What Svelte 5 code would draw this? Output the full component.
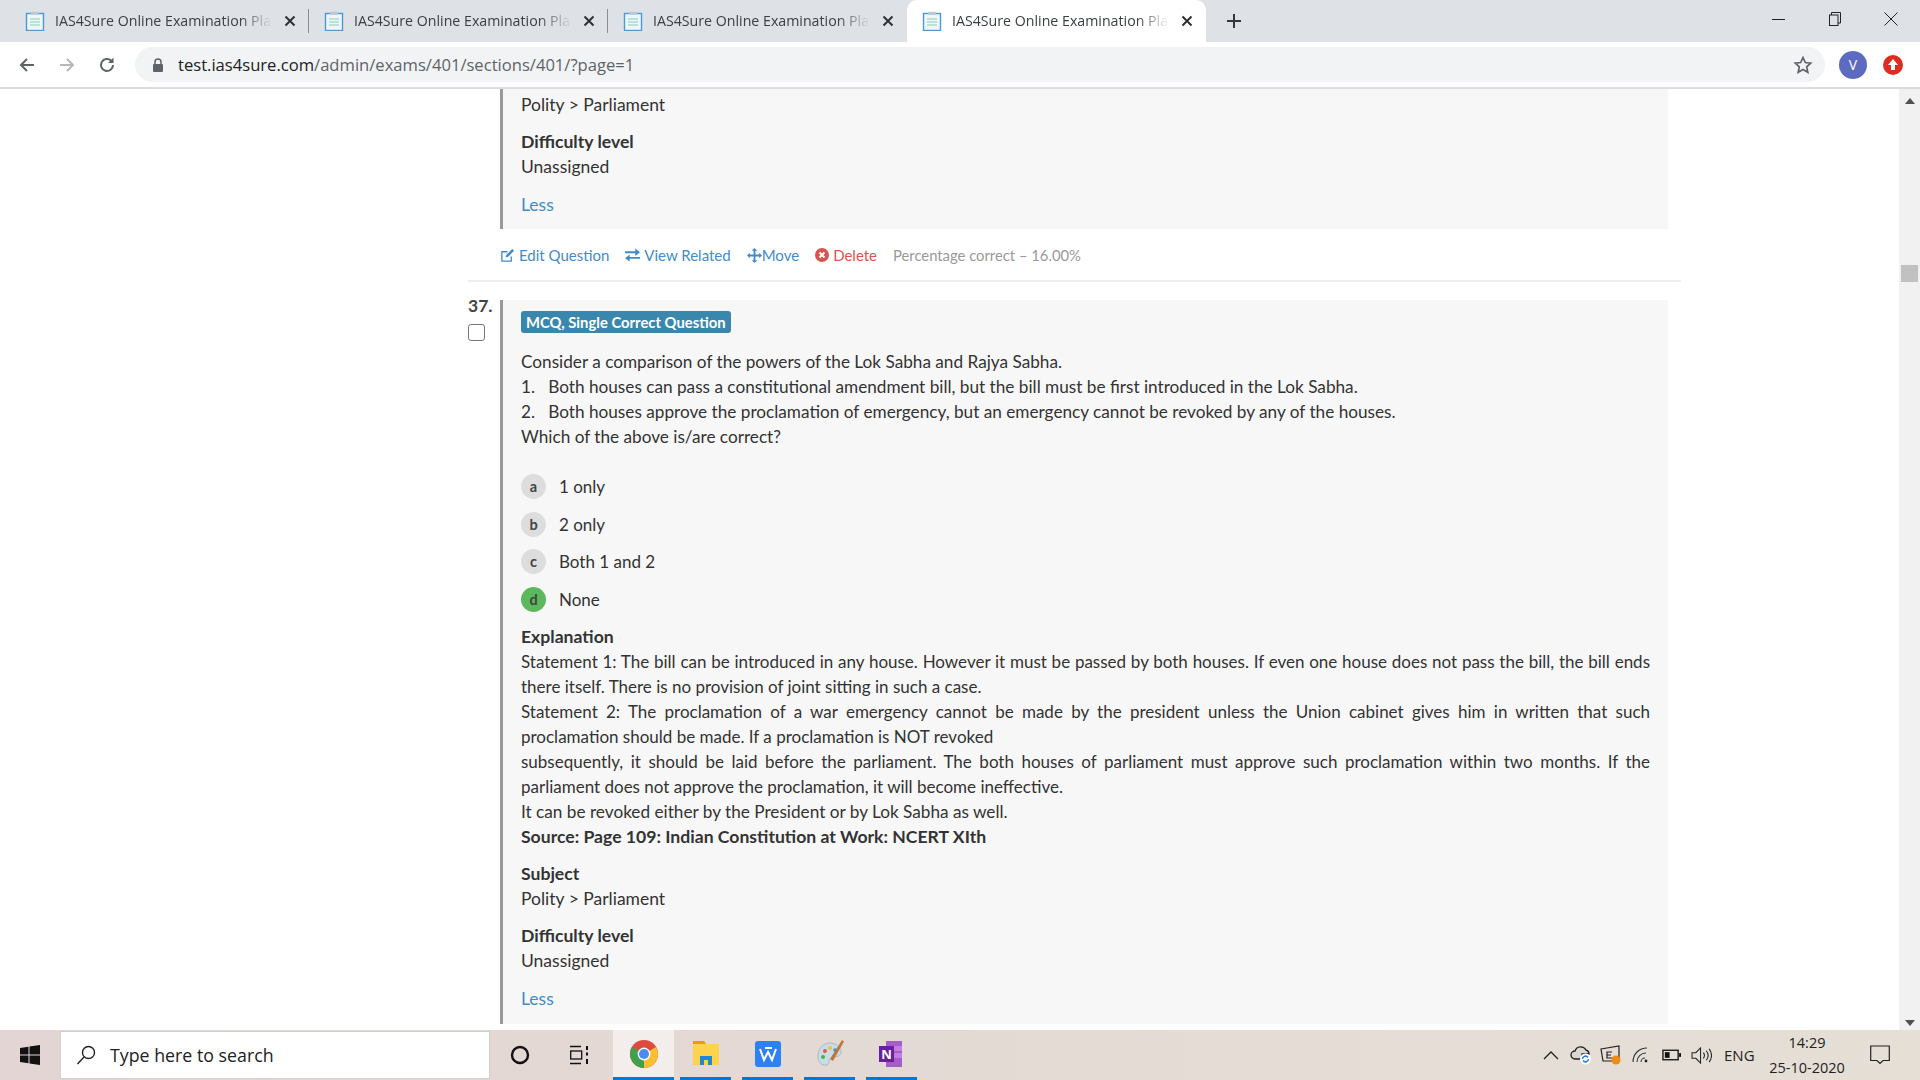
<script>
  const tabs = [{ active: false }, { active: false }, { active: false }, { active: true }];
  const options = [
    { key: 'a', text: '1 only' },
    { key: 'b', text: '2 only' },
    { key: 'c', text: 'Both 1 and 2' },
    { key: 'd', text: 'None', correct: true }
  ];
</script>

{#snippet tabIcon()}
  <svg class="tab-icon" viewBox="0 0 20 20" width="20" height="20">
    <rect x="1.5" y="2.5" width="17" height="17" fill="#eef6fb" stroke="#4a9bd6" stroke-width="1.4" />
    <rect x="6" y="0.8" width="8" height="3" fill="#b9c8d2" />
    <path d="M5 8h10M5 11h10M5 14h10" stroke="#a9dcc9" stroke-width="1.6" />
  </svg>
{/snippet}

<div class="window">
  <div class="tabbar">
    <div class="tabs">
      {#each tabs as tab, i}
        <div class="tab" class:active={tab.active} class:sep={i < 2}>
          {@render tabIcon()}
          <span class="tab-title">IAS4Sure Online Examination Plat</span>
          <svg class="tab-close" viewBox="0 0 12 12" width="12" height="12">
            <path d="M1.5 1.5l9 9M10.5 1.5l-9 9" stroke="#2f3134" stroke-width="2" />
          </svg>
        </div>
      {/each}
      <svg class="new-tab" viewBox="0 0 16 16" width="16" height="16">
        <path d="M8 1v14M1 8h14" stroke="#35373a" stroke-width="2" />
      </svg>
    </div>
    <div class="win-controls">
      <svg viewBox="0 0 14 14" width="14" height="14"><path d="M0 7.5h13" stroke="#222" stroke-width="1" /></svg>
      <svg viewBox="0 0 14 14" width="14" height="14" fill="none" stroke="#222">
        <path d="M3.5 3V.5h9V11H10" /><rect x="1.5" y="3" width="8.5" height="10.5" />
      </svg>
      <svg viewBox="0 0 14 14" width="14" height="14"><path d="M.5.5l13 13M13.5.5l-13 13" stroke="#222" /></svg>
    </div>
  </div>

  <div class="toolbar">
    <svg class="nav" viewBox="0 0 18 18" width="18" height="18"><path d="M16 9H3M9 3L3 9l6 6" fill="none" stroke="#5f6368" stroke-width="2" /></svg>
    <svg class="nav" viewBox="0 0 18 18" width="18" height="18"><path d="M2 9h13M9 3l6 6-6 6" fill="none" stroke="#b5b7ba" stroke-width="2" /></svg>
    <svg class="nav" viewBox="0 0 18 18" width="18" height="18">
      <path d="M15 9a6 6 0 1 1-1.8-4.3" fill="none" stroke="#5f6368" stroke-width="2" /><path d="M15.5 1.5v5.5H10z" fill="#5f6368" />
    </svg>
    <div class="omnibox">
      <svg class="lock" viewBox="0 0 12 14" width="12" height="14">
        <rect x="1" y="6" width="10" height="8" rx="1" fill="#5f6368" />
        <path d="M3 6V4a3 3 0 0 1 6 0v2" fill="none" stroke="#5f6368" stroke-width="1.5" />
      </svg>
      <span class="url"><span class="host">test.ias4sure.com</span>/admin/exams/401/sections/401/?page=1</span>
      <svg class="star" viewBox="0 0 20 20" width="20" height="20">
        <path d="M10 2.5l2.3 5 5.4.6-4 3.7 1.1 5.4-4.8-2.8-4.8 2.8 1.1-5.4-4-3.7 5.4-.6z" fill="none" stroke="#5f6368" stroke-width="1.7" />
      </svg>
    </div>
    <div class="avatar">V</div>
    <svg class="update" viewBox="0 0 20 20" width="20" height="20">
      <circle cx="10" cy="10" r="10" fill="#dd2c22" /><path d="M10 4l5 6h-3v5H8v-5H5z" fill="#fff" />
    </svg>
  </div>

  <div class="viewport">
    <div class="page">
      <div class="question">
        <div class="q-side"></div>
        <div class="panel panel-top">
          <p class="short">Polity &gt; Parliament</p>
          <p class="label gap">Difficulty level</p>
          <p class="short">Unassigned</p>
          <p class="less short"><a href="#less">Less</a></p>
        </div>
      </div>

      <div class="actions">
        <a href="#edit">
          <svg viewBox="0 0 16 16" width="15" height="15" fill="none" stroke="#428bca" stroke-width="1.4">
            <path d="M12 9v5H2V4h6" /><path d="M6 10l.6-2.6L13 1l2 2-6.4 6.4z" fill="#428bca" stroke="none" />
          </svg>
          Edit Question</a>
        <a href="#related">
          <svg viewBox="0 0 16 14" width="15" height="14" fill="#428bca">
            <path d="M0 3h11V0l5 4-5 4V5H0zM16 9H5V6.5L0 10.5 5 14v-3h11z" />
          </svg>
          View Related</a>
        <a href="#move" class="tight">
          <svg viewBox="0 0 16 16" width="15" height="15" fill="#428bca">
            <path d="M8 0l3 3H9v4h4V5l3 3-3 3V9H9v4h2l-3 3-3-3h2V9H3v2L0 8l3-3v2h4V3H5z" />
          </svg>Move</a>
        <a href="#delete" class="danger">
          <svg viewBox="0 0 14 14" width="14" height="14">
            <circle cx="7" cy="7" r="7" fill="#d9534f" /><path d="M4.5 4.5l5 5M9.5 4.5l-5 5" stroke="#fff" stroke-width="2" />
          </svg>
          Delete</a>
        <span class="percent">Percentage correct – 16.00%</span>
      </div>

      <hr />

      <div class="question">
        <div class="q-side">
          <div class="q-num">37.</div>
          <div class="q-check"></div>
        </div>
        <div class="panel">
          <span class="badge">MCQ, Single Correct Question</span>
          <div class="stem">
            <p>Consider a comparison of the powers of the Lok Sabha and Rajya Sabha.</p>
            <p>1.&nbsp;&nbsp; Both houses can pass a constitutional amendment bill, but the bill must be first introduced in the Lok Sabha.</p>
            <p>2.&nbsp;&nbsp; Both houses approve the proclamation of emergency, but an emergency cannot be revoked by any of the houses.</p>
            <p>Which of the above is/are correct?</p>
          </div>
          <div class="options">
            {#each options as opt}
              <div class="option">
                <span class="opt-key" class:correct={opt.correct}>{opt.key}</span>
                <span>{opt.text}</span>
              </div>
            {/each}
          </div>
          <p class="label">Explanation</p>
          <p class="just">Statement 1: The bill can be introduced in any house. However it must be passed by both houses. If even one house does not pass the bill, the bill ends there itself. There is no provision of joint sitting in such a case.</p>
          <p class="just">Statement 2: The proclamation of a war emergency cannot be made by the president unless the Union cabinet gives him in written that such proclamation should be made. If a proclamation is NOT revoked</p>
          <p class="just">subsequently, it should be laid before the parliament. The both houses of parliament must approve such proclamation within two months. If the parliament does not approve the proclamation, it will become ineffective.</p>
          <p>It can be revoked either by the President or by Lok Sabha as well.</p>
          <p class="label">Source: Page 109: Indian Constitution at Work: NCERT XIth</p>
          <p class="label gap">Subject</p>
          <p class="short">Polity &gt; Parliament</p>
          <p class="label gap">Difficulty level</p>
          <p class="short">Unassigned</p>
          <p class="less short"><a href="#less">Less</a></p>
        </div>
      </div>
    </div>

    <div class="scrollbar">
      <svg viewBox="0 0 10 6" width="10" height="6"><path d="M5 0l5 6H0z" fill="#505050" /></svg>
      <div class="thumb"></div>
      <svg class="down" viewBox="0 0 10 6" width="10" height="6"><path d="M5 6l5-6H0z" fill="#505050" /></svg>
    </div>
  </div>

  <div class="taskbar">
    <svg class="start" viewBox="0 0 20 20" width="20" height="20" fill="#111">
      <path d="M0 3l8.5-1.2V9.5H0zM9.5 1.6L20 0v9.5H9.5zM0 10.5h8.5v7.7L0 17zM9.5 10.5H20V20L9.5 18.4z" />
    </svg>
    <div class="search">
      <svg viewBox="0 0 20 20" width="20" height="20" fill="none" stroke="#222" stroke-width="1.4">
        <circle cx="12.5" cy="7.5" r="6" /><path d="M8 12L1.5 19" />
      </svg>
      <span>Type here to search</span>
    </div>
    <svg class="cortana" viewBox="0 0 20 20" width="20" height="20"><circle cx="10" cy="10" r="8" fill="none" stroke="#111" stroke-width="2.4" /></svg>
    <svg class="taskview" viewBox="0 0 20 20" width="20" height="20" fill="none" stroke="#111" stroke-width="1.3">
      <path d="M0 1.5h11M0 18.5h11" /><rect x="0.7" y="6" width="11" height="8" /><path d="M17 1v4M17 7.5v3M17 14v5" stroke-width="2" />
    </svg>
    <div class="pinned">
      <div class="pin hot">
        <svg viewBox="0 0 28 28" width="28" height="28">
          <circle cx="14" cy="14" r="14" fill="#dd4b3e" />
          <path d="M14 14L26.1 7A14 14 0 0 1 14 28z" fill="#fbc02d" />
          <path d="M14 14L14 28A14 14 0 0 1 1.9 7z" fill="#3fa14f" />
          <circle cx="14" cy="14" r="6.4" fill="#fff" /><circle cx="14" cy="14" r="5" fill="#4a8bf0" />
        </svg>
      </div>
      <div class="pin">
        <svg viewBox="0 0 28 28" width="28" height="28">
          <path d="M1 1h11l2 3H1z" fill="#e2a100" /><rect x="1" y="4" width="26" height="21" fill="#fcd34d" />
          <path d="M8 25v-9h12v9h-4v-5h-4v5z" fill="#1e88d6" />
        </svg>
      </div>
      <div class="pin">
        <svg viewBox="0 0 28 28" width="28" height="28">
          <rect x="1" y="1" width="26" height="26" rx="3" fill="#2f80f0" />
          <path d="M6 9l4 11 4-8 4 8 4-11M11 8h7" fill="none" stroke="#fff" stroke-width="2" />
        </svg>
      </div>
      <div class="pin">
        <svg viewBox="0 0 28 28" width="28" height="28">
          <path d="M14 3C6 3 1 10 2 18c.6 5 5 8 9 7 3-1 1-4 3-6 3-3 9-1 11-6 1-5-5-10-11-10z" fill="#c9dce6" stroke="#8aa" stroke-width=".6" />
          <circle cx="9" cy="11" r="2" fill="#e25b4f" /><circle cx="14" cy="8" r="2" fill="#f0c040" /><circle cx="7" cy="17" r="2" fill="#4caf50" /><circle cx="19" cy="10" r="1.8" fill="#3f8fd6" />
          <path d="M26 0l2 1.5L17 21l-3-2z" fill="#b9793c" />
        </svg>
      </div>
      <div class="pin">
        <svg viewBox="0 0 28 28" width="28" height="28">
          <rect x="8" y="1" width="16" height="26" fill="#a55ec9" />
          <path d="M16 6h8v5h-8zM16 13h8v5h-8z" fill="#c27de0" />
          <rect x="1" y="6" width="15" height="16" fill="#6a1fa0" />
          <text x="8.5" y="18.5" class="one-n">N</text>
        </svg>
      </div>
    </div>
    <div class="tray">
      <div class="tray-icons">
        <svg viewBox="0 0 16 10" width="16" height="10"><path d="M1 9l7-7 7 7" fill="none" stroke="#222" stroke-width="1.3" /></svg>
        <svg viewBox="0 0 22 20" width="22" height="20">
          <path d="M5 14a4 4 0 0 1 0-8 6 6 0 0 1 11-1 4 4 0 0 1 3 4H12v5z" fill="#dcd8d0" stroke="#222" stroke-width="1.3" />
          <circle cx="15.5" cy="14" r="5.5" fill="#fff" /><path d="M12.5 14a3 3 0 0 1 5.5-1.5M18.5 14a3 3 0 0 1-5.5 1.5" fill="none" stroke="#2a80d0" stroke-width="1.5" />
        </svg>
        <svg viewBox="0 0 22 20" width="22" height="20">
          <path d="M1 4l18-3v15H3z" fill="none" stroke="#222" stroke-width="1.2" />
          <path d="M12 7H7v6h5M7 10h4" fill="none" stroke="#222" stroke-width="1.2" />
          <circle cx="16" cy="15" r="4.5" fill="#f08a10" />
        </svg>
        <svg viewBox="0 0 18 18" width="18" height="18" fill="none" stroke="#333" stroke-width="1.1">
          <path d="M1 16C1 8 7 2 15 2M5 16c0-5 4-9 9-9M9 16c0-2 1.500-4 4-4" /><circle cx="14" cy="15" r="1.400" fill="#222" stroke="none" />
        </svg>
        <svg viewBox="0 0 20 12" width="19" height="12">
          <rect x="1" y="1" width="16" height="10" fill="none" stroke="#111" stroke-width="1.4" /><rect x="3" y="3" width="5" height="6" fill="#111" /><rect x="18" y="4" width="2" height="4" fill="#111" />
        </svg>
        <svg viewBox="0 0 22 18" width="21" height="17" fill="none" stroke="#222" stroke-width="1.1">
          <path d="M1 6h4l5-5v16l-5-5H1zM13 6c1.500 2 1.500 4 0 6M16 4c2.500 3 2.500 7 0 10M19 2c3.500 4 3.500 10 0 14" />
        </svg>
      </div>
      <span class="lang">ENG</span>
      <div class="clock"><span>14:29</span><span>25-10-2020</span></div>
      <svg class="notif" viewBox="0 0 20 20" width="20" height="20">
        <path d="M.7 1h18.600v14.500h-6.300L10 18.500 7 15.500H.7z" fill="none" stroke="#222" stroke-width="1.2" />
      </svg>
    </div>
  </div>
</div>

<style>
  :global(body) {
    margin: 0;
    background: #fff;
  }

  .window {
    display: flex;
    flex-direction: column;
    width: 1920px;
    height: 1080px;
    overflow: hidden;
    font-family: Lato, "Liberation Sans", sans-serif;
    color: #333;
  }

  .tabbar {
    display: flex;
    justify-content: space-between;
    height: 42px;
    flex-shrink: 0;
    background: #dee1e6;
  }

  .tabs {
    display: flex;
    align-items: center;
    padding-left: 10px;
  }

  .tab {
    position: relative;
    display: flex;
    align-items: center;
    width: 299px;
    height: 42px;
    box-sizing: border-box;
    padding: 0 13px 0 15px;
    font-family: "Open Sans", sans-serif;
    font-size: 14.2px;
    color: #3c4043;
  }

  .tab.sep::after {
    content: "";
    position: absolute;
    right: 0;
    top: 9px;
    height: 24px;
    width: 1px;
    background: #8b8e92;
  }

  .tab.active {
    background: #fff;
    border-radius: 10px 10px 0 0;
  }

  .tab-icon {
    flex-shrink: 0;
    margin-right: 10px;
  }

  .tab-title {
    flex: 1;
    overflow: hidden;
    white-space: nowrap;
    padding-bottom: 2px;
    mask-image: linear-gradient(to right, #000 85%, transparent 100%);
    -webkit-mask-image: linear-gradient(to right, #000 85%, transparent 100%);
    margin-right: 12px;
  }

  .new-tab {
    margin-left: 20px;
  }

  .win-controls {
    display: flex;
    align-items: center;
    gap: 42px;
    padding: 0 22px 4px 0;
  }

  .toolbar {
    display: flex;
    align-items: center;
    flex-shrink: 0;
    padding-left: 18px;
    box-sizing: border-box;
    border-bottom: 2px solid #dcdce0;
    height: 47px;
  }

  .nav {
    margin-right: 22px;
  }

  .omnibox {
    display: flex;
    align-items: center;
    width: 1690px;
    height: 35px;
    margin-left: -3px;
    box-sizing: border-box;
    padding: 0 34px 0 17px;
    background: #f1f3f4;
    border-radius: 18px;
  }

  .lock {
    margin-right: 14px;
  }

  .url {
    flex: 1;
    font-family: "Open Sans", sans-serif;
    font-size: 16.6px;
    color: #5f6368;
  }

  .host {
    color: #202124;
  }

  .star {
    margin-right: -22px;
  }

  .avatar {
    display: flex;
    align-items: center;
    justify-content: center;
    width: 28px;
    height: 28px;
    margin-left: 14px;
    border-radius: 50%;
    background: #5c6bc0;
    color: #fff;
    font-family: "Open Sans", sans-serif;
    font-size: 14px;
  }

  .update {
    margin-left: 16px;
  }

  .viewport {
    flex: 1;
    position: relative;
    display: flex;
    min-height: 0;
    overflow: hidden;
  }

  .page {
    flex: 1;
    padding: 0 231px 0 468px;
    min-width: 0;
    font-size: 17.2px;
    line-height: 25px;
  }

  .question {
    display: flex;
  }

  .q-side {
    width: 32px;
    flex-shrink: 0;
  }

  .q-num {
    font-size: 17.5px;
    font-weight: 700;
    line-height: 20px;
    color: #444;
    margin-top: -4px;
  }

  .q-check {
    width: 15px;
    height: 15px;
    margin-top: 8px;
    border: 1px solid #767676;
    border-radius: 3px;
    background: #fff;
  }

  .panel {
    flex: 1;
    box-sizing: border-box;
    border-left: 3px solid #999;
    background: #f7f7f7;
    padding: 9px 18px 13px 18px;
  }

  .panel-top {
    padding-top: 3px;
    padding-bottom: 12px;
    height: 140px;
  }

  p {
    margin: 0;
  }

  .short {
    font-size: 17.5px;
  }

  .label {
    font-size: 17.6px;
    font-weight: 700;
    color: #333;
  }

  .gap {
    margin-top: 12px;
  }

  .less {
    margin-top: 13px;
  }

  a {
    color: #428bca;
    text-decoration: none;
  }

  .actions {
    display: flex;
    align-items: center;
    gap: 16px;
    height: 51px;
    box-sizing: border-box;
    padding-top: 1px;
    margin-left: 32px;
    font-size: 15px;
  }

  .actions a {
    display: flex;
    align-items: center;
    gap: 4px;
  }

  .actions a.tight {
    gap: 0;
  }

  .actions a.danger {
    color: #d9534f;
  }

  .percent {
    color: #999;
    font-size: 14.8px;
  }

  hr {
    height: 2px;
    margin: 0 -13px 18px 0;
    border: 0;
    background: #eee;
  }

  .badge {
    display: inline-block;
    padding: 0 5px;
    height: 22px;
    line-height: 22px;
    border-radius: 3px;
    background: #3a87ad;
    color: #fff;
    font-size: 14.8px;
    font-weight: 700;
  }

  .stem {
    margin-top: 15px;
  }

  .options {
    display: flex;
    flex-direction: column;
    gap: 12.500px;
    margin: 25px 0 12px;
    font-size: 17px;
  }

  .option {
    display: flex;
    align-items: center;
    gap: 13px;
  }

  .opt-key {
    display: flex;
    align-items: center;
    justify-content: center;
    width: 25px;
    height: 25px;
    border-radius: 50%;
    background: #ddd;
    font-size: 14.5px;
    font-weight: 700;
    color: #444;
  }

  .opt-key.correct {
    background: #5cb85c;
  }

  .just {
    font-size: 17px;
    text-align: justify;
  }

  .scrollbar {
    position: relative;
    display: flex;
    flex-direction: column;
    align-items: center;
    width: 21px;
    flex-shrink: 0;
    padding-top: 9px;
    box-sizing: border-box;
    background: #f1f1f1;
  }

  .thumb {
    width: 17px;
    height: 17px;
    margin-top: 161px;
    background: #c1c1c1;
  }

  .down {
    margin-top: auto;
    margin-bottom: 4px;
  }

  .taskbar {
    display: flex;
    align-items: center;
    height: 50px;
    flex-shrink: 0;
    background: linear-gradient(to right, #e3d5d3, #e5dfd6);
    font-family: "Open Sans", sans-serif;
    color: #222;
  }

  .start {
    margin: 0 20px;
  }

  .search {
    display: flex;
    align-items: center;
    gap: 14px;
    width: 430px;
    height: 48px;
    box-sizing: border-box;
    padding-left: 15px;
    background: #fff;
    border: 1px solid #cfcfcf;
    font-size: 17.8px;
  }

  .cortana {
    margin-left: 20px;
  }

  .taskview {
    margin-left: 40px;
  }

  .pinned {
    display: flex;
    gap: 11px;
    margin-left: 23px;
    height: 50px;
  }

  .pin {
    display: flex;
    align-items: center;
    justify-content: center;
    width: 51px;
    height: 50px;
    box-sizing: border-box;
    border-bottom: 3px solid #0078d7;
  }

  .pin.hot {
    width: 61px;
    margin-right: -5px;
    background: #f3edec;
  }

  .one-n {
    font-family: "Open Sans", sans-serif;
    font-size: 13px;
    font-weight: 700;
    fill: #fff;
    text-anchor: middle;
  }

  .tray {
    display: flex;
    align-items: center;
    margin-left: auto;
    padding-right: 30px;
  }

  .tray-icons {
    display: grid;
    grid-template-columns: repeat(6, 30px);
    justify-items: center;
    align-items: center;
  }

  .lang {
    width: 30px;
    margin-left: 8px;
    font-size: 15px;
    text-align: center;
  }

  .clock {
    display: flex;
    flex-direction: column;
    align-items: center;
    width: 76px;
    margin: 0 25px 0 15px;
    font-size: 14.5px;
    line-height: 25px;
  }
</style>
